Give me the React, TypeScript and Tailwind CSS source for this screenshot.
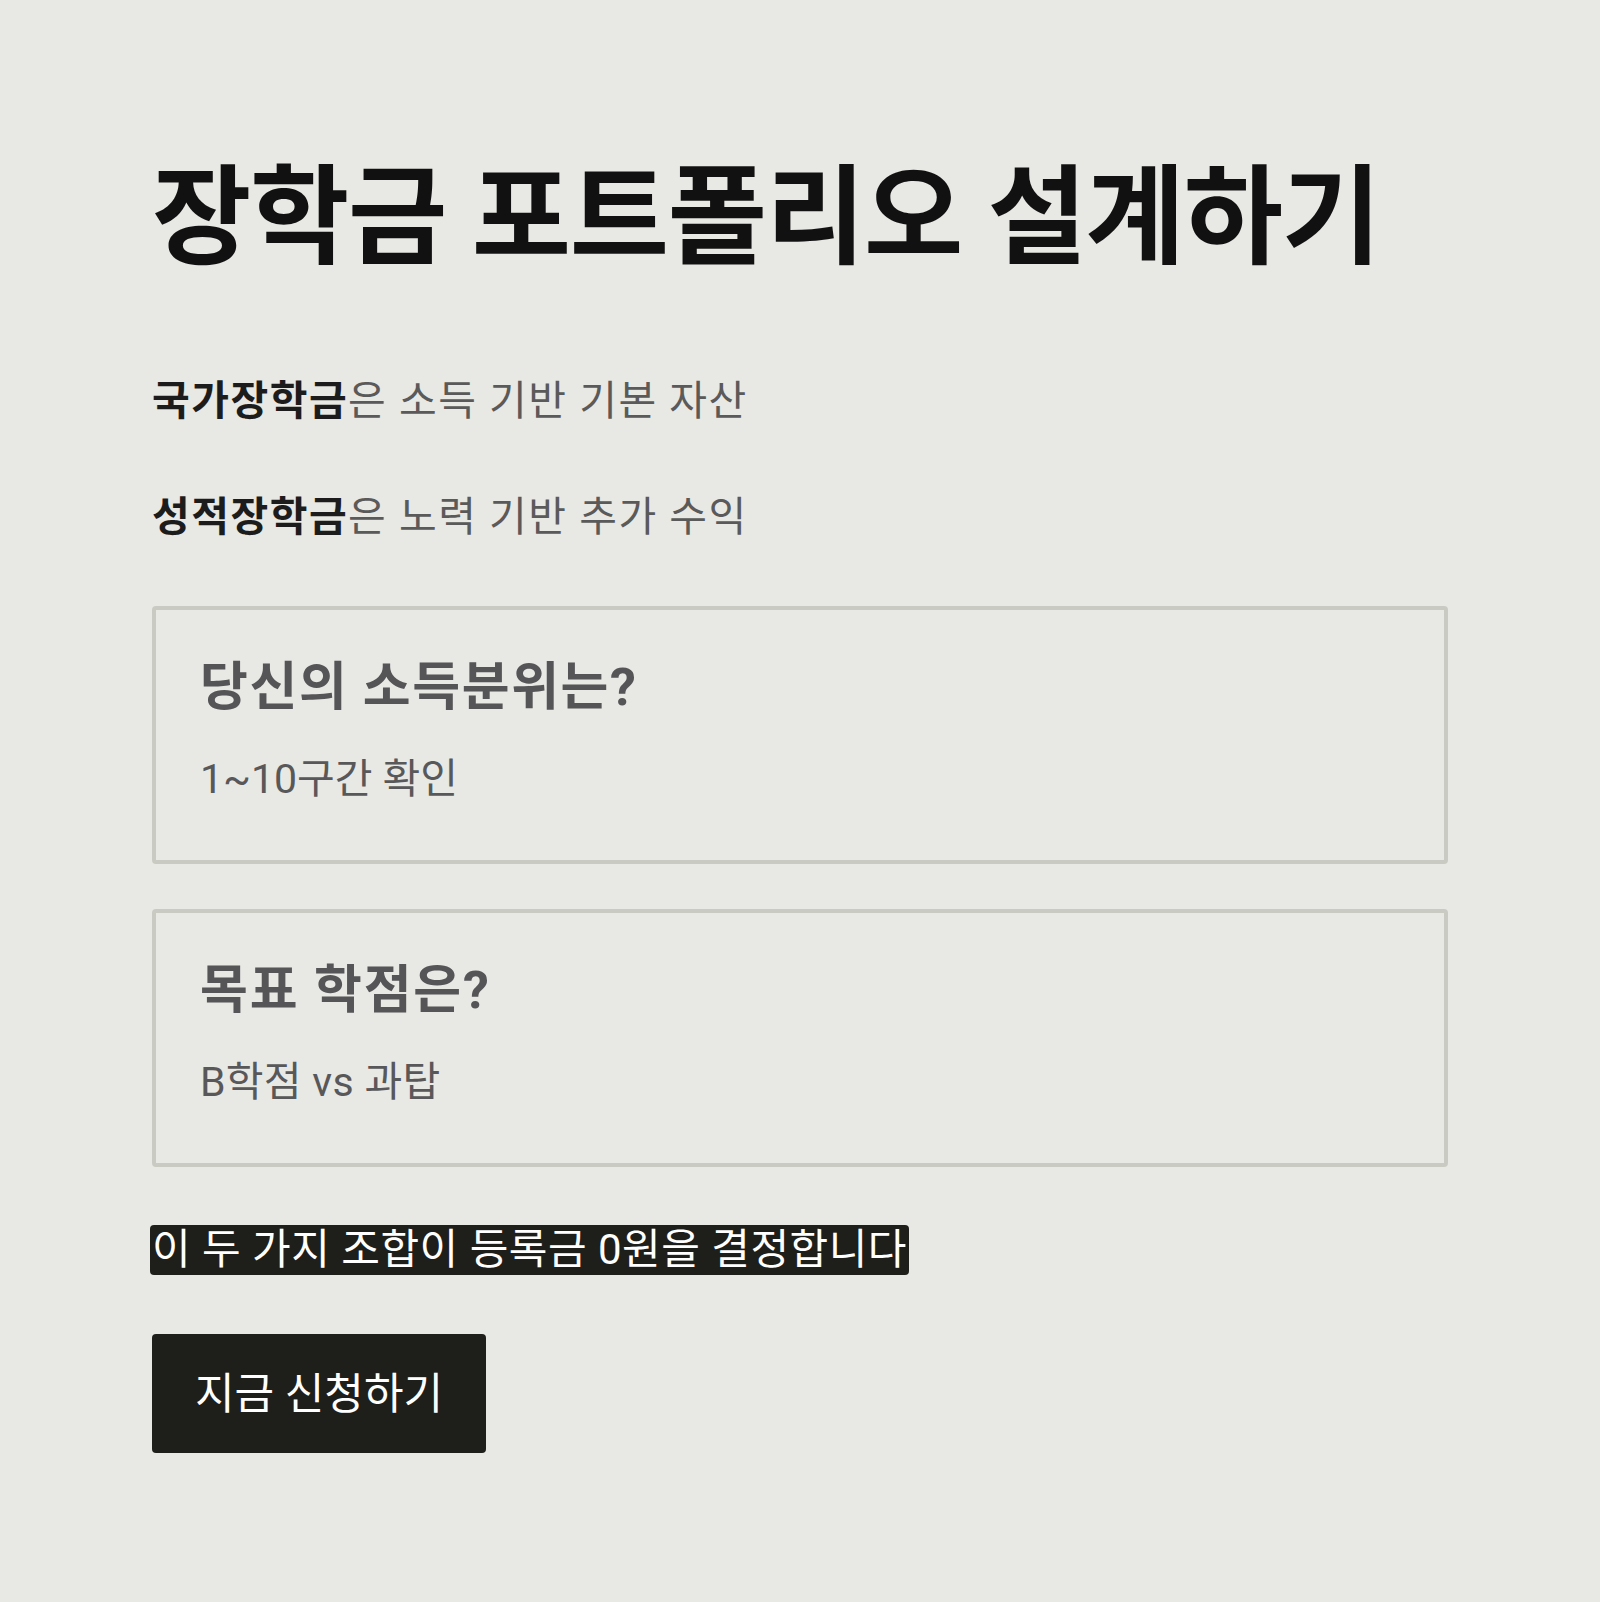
export default function App() {
  return (
    <div className="min-h-[1602px] w-full bg-[#e8e8e4] font-['Roboto','Noto_Sans_CJK_KR',sans-serif]">
      <div className="mx-auto w-[1296px] pt-[164px] pb-[100px]">
        <h1 className="text-[108px] font-bold leading-[108px] tracking-[-1.3px] text-[#111111]">
          장학금 포트폴리오 설계하기
        </h1>
        <p className="mt-[101px] text-[41px] leading-[56px] tracking-[1.5px] text-[#5a5a5a]">
          <span className="font-bold text-[#1c1c1c]">국가장학금</span>은 소득 기반 기본 자산
        </p>
        <p className="mt-[60px] text-[41px] leading-[56px] tracking-[1.5px] text-[#5a5a5a]">
          <span className="font-bold text-[#1c1c1c]">성적장학금</span>은 노력 기반 추가 수익
        </p>

        <div className="mt-[61px] flex flex-col gap-[45px]">
          <div className="h-[258px] rounded-[4px] border-[4px] border-[#c9cac1] pl-[44px] pt-[48px]">
            <div className="text-[52px] font-bold leading-[60px] tracking-[1.6px] text-[#555557]">당신의 소득분위는?</div>
            <div className="mt-[33px] text-[41px] leading-[56px] text-[#58585a]">1~10구간 확인</div>
          </div>
          <div className="h-[258px] rounded-[4px] border-[4px] border-[#c9cac1] pl-[44px] pt-[48px]">
            <div className="text-[52px] font-bold leading-[60px] tracking-[1.8px] text-[#555557]">목표 학점은?</div>
            <div className="mt-[33px] text-[41px] leading-[56px] tracking-[0.3px] text-[#58585a]">B학점 vs 과탑</div>
          </div>
        </div>

        <div className="mt-[58px]">
          <span className="-ml-[2px] inline-block rounded-[4px] bg-[#1e1e1a] px-[2px] text-[42px] leading-[50px] tracking-[0.5px] text-white">
            이 두 가지 조합이 등록금 0원을 결정합니다
          </span>
        </div>

        <button className="mt-[59px] flex h-[119px] w-[334px] items-center justify-center rounded-[4px] bg-[#1e1e1a] text-[43px] leading-[56px] text-white">
          지금 신청하기
        </button>
      </div>
    </div>
  );
}
